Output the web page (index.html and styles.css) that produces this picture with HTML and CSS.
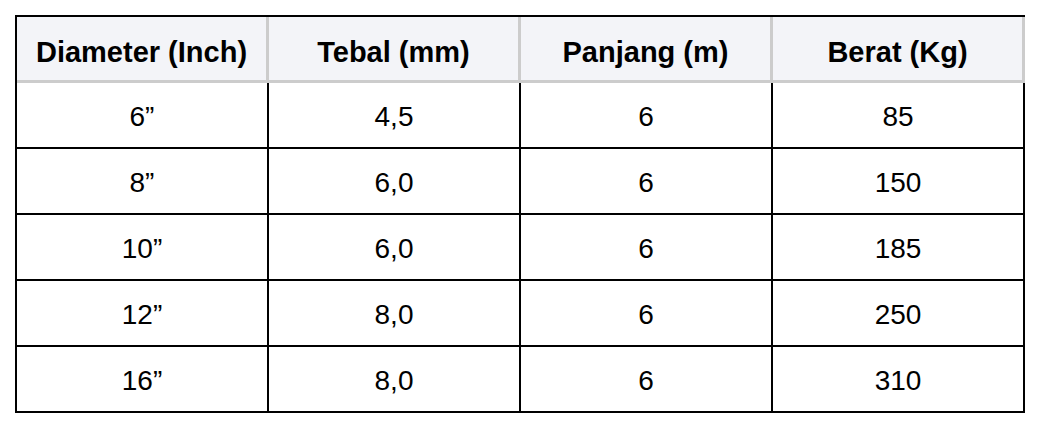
FILE: index.html
```html
<!DOCTYPE html>
<html>
<head>
<meta charset="utf-8">
<link rel="stylesheet" href="styles.css">
</head>
<body>
<div class="tbl">
  <div class="row head">
    <div class="cell">Diameter (Inch)</div>
    <div class="cell">Tebal (mm)</div>
    <div class="cell">Panjang (m)</div>
    <div class="cell">Berat (Kg)</div>
  </div>
  <div class="row">
    <div class="cell">6”</div><div class="cell">4,5</div><div class="cell">6</div><div class="cell">85</div>
  </div>
  <div class="row">
    <div class="cell">8”</div><div class="cell">6,0</div><div class="cell">6</div><div class="cell">150</div>
  </div>
  <div class="row">
    <div class="cell">10”</div><div class="cell">6,0</div><div class="cell">6</div><div class="cell">185</div>
  </div>
  <div class="row">
    <div class="cell">12”</div><div class="cell">8,0</div><div class="cell">6</div><div class="cell">250</div>
  </div>
  <div class="row">
    <div class="cell">16”</div><div class="cell">8,0</div><div class="cell">6</div><div class="cell">310</div>
  </div>
</div>
</body>
</html>
```

FILE: styles.css
```css
html, body {
  margin: 0;
  padding: 0;
  background: #ffffff;
}
body {
  padding: 15px;
  font-family: "Liberation Sans", Arial, sans-serif;
  color: #000000;
}
.tbl {
  width: 1010px;
  box-sizing: border-box;
  border-top: 2px solid #000;
  border-left: 2px solid #000;
  display: flex;
  flex-direction: column;
}
.row {
  display: grid;
  grid-template-columns: repeat(4, 252px);
  height: 66px;
}
.cell {
  box-sizing: border-box;
  display: flex;
  align-items: center;
  justify-content: center;
  font-size: 28px;
  padding-top: 4px;
  border-right: 2px solid #000;
  border-bottom: 2px solid #000;
}
.head .cell {
  background: #f3f4f8;
  font-weight: bold;
  font-size: 29px;
  padding-top: 7px;
  border-right: 3px solid #cccccc;
  border-bottom: 3px solid #cccccc;
}
```
